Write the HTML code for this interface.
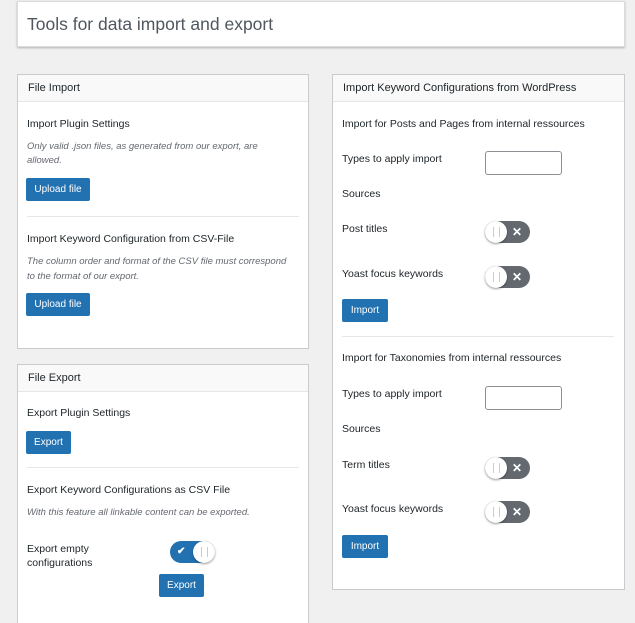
<!DOCTYPE html>
<html><head><meta charset="utf-8"><style>
*{box-sizing:border-box;margin:0;padding:0}
html,body{width:635px;height:623px;overflow:hidden}
body{background:#f0f0f1;font-family:"Liberation Sans",sans-serif;color:#1d2327;position:relative;font-size:10.5px}
.a{position:absolute;white-space:nowrap}
.title{left:17px;top:1px;width:608px;height:46px;background:#fff;border:1px solid #dcdcde;box-shadow:0 1px 2px rgba(0,0,0,.25)}
.title span{position:absolute;left:9px;top:12px;font-size:17.5px;color:#50575e}
.panel{background:#fff;border:1px solid #c8cbcf}
.hd{position:absolute;left:0;top:0;right:0;height:27px;background:#f9f9f9;border-bottom:1px solid #e6e6e6;padding:7px 0 0 10px;font-size:11px}
.i{font-style:italic;color:#646970;font-size:9.5px}
.btn{position:absolute;background:#2271b1;color:#fff;border-radius:2px;font-size:10px;text-align:center;line-height:24px;height:23px}
.sep{position:absolute;height:1px;background:#e6e6e6}
.inp{position:absolute;width:77px;height:24px;border:1px solid #8c8f94;border-radius:3px;background:#fff}
.tg{position:absolute;width:45px;height:22px;border-radius:11px;background:#646970}
.tg .k{position:absolute;top:0;width:22px;height:22px;border-radius:50%;background:#fff;box-shadow:0 1px 2px rgba(0,0,0,.4)}
.tg .k:before{content:"";position:absolute;left:8px;top:6px;width:5px;height:10px;border-left:1px solid #ccc;border-right:1px solid #ccc}
.tg.off .k{left:0}
.tg.on{background:#2271b1}
.tg.on .k{right:0}
.tg .g{position:absolute;top:0;line-height:22px;color:#fff;font-size:12px;font-weight:bold}
</style></head><body>
<div class="a title"><span>Tools for data import and export</span></div>

<div class="a panel" style="left:17px;top:74px;width:292px;height:275px"><div class="hd">File Import</div></div>
<div class="a" style="left:27px;top:118px">Import Plugin Settings</div>
<div class="a i" style="left:27px;top:141px">Only valid .json files, as generated from our export, are</div>
<div class="a i" style="left:27px;top:155px">allowed.</div>
<div class="btn" style="left:26px;top:178px;width:64px">Upload file</div>
<div class="sep" style="left:27px;top:216px;width:272px"></div>
<div class="a" style="left:27px;top:233px">Import Keyword Configuration from CSV-File</div>
<div class="a i" style="left:27px;top:256px">The column order and format of the CSV file must correspond</div>
<div class="a i" style="left:27px;top:271px">to the format of our export.</div>
<div class="btn" style="left:26px;top:293px;width:64px">Upload file</div>

<div class="a panel" style="left:17px;top:364px;width:292px;height:270px"><div class="hd">File Export</div></div>
<div class="a" style="left:27px;top:407px">Export Plugin Settings</div>
<div class="btn" style="left:26px;top:431px;width:45px">Export</div>
<div class="sep" style="left:27px;top:467px;width:272px"></div>
<div class="a" style="left:27px;top:484px">Export Keyword Configurations as CSV File</div>
<div class="a i" style="left:27px;top:507px">With this feature all linkable content can be exported.</div>
<div class="a" style="left:27px;top:543px">Export empty</div>
<div class="a" style="left:27px;top:557px">configurations</div>
<div class="tg on" style="left:170px;top:541px"><span class="g" style="left:7px;font-size:10px">✔</span><div class="k"></div></div>
<div class="btn" style="left:159px;top:574px;width:45px">Export</div>

<div class="a panel" style="left:332px;top:74px;width:293px;height:516px"><div class="hd">Import Keyword Configurations from WordPress</div></div>
<div class="a" style="left:342px;top:118px">Import for Posts and Pages from internal ressources</div>
<div class="a" style="left:342px;top:153px">Types to apply import</div>
<div class="inp" style="left:485px;top:151px"></div>
<div class="a" style="left:342px;top:188px">Sources</div>
<div class="a" style="left:342px;top:223px">Post titles</div>
<div class="tg off" style="left:485px;top:221px"><div class="k"></div><span class="g" style="left:27px">✕</span></div>
<div class="a" style="left:342px;top:268px">Yoast focus keywords</div>
<div class="tg off" style="left:485px;top:266px"><div class="k"></div><span class="g" style="left:27px">✕</span></div>
<div class="btn" style="left:342px;top:299px;width:46px">Import</div>
<div class="sep" style="left:342px;top:336px;width:272px"></div>
<div class="a" style="left:342px;top:352px">Import for Taxonomies from internal ressources</div>
<div class="a" style="left:342px;top:388px">Types to apply import</div>
<div class="inp" style="left:485px;top:386px"></div>
<div class="a" style="left:342px;top:423px">Sources</div>
<div class="a" style="left:342px;top:459px">Term titles</div>
<div class="tg off" style="left:485px;top:457px"><div class="k"></div><span class="g" style="left:27px">✕</span></div>
<div class="a" style="left:342px;top:503px">Yoast focus keywords</div>
<div class="tg off" style="left:485px;top:501px"><div class="k"></div><span class="g" style="left:27px">✕</span></div>
<div class="btn" style="left:342px;top:535px;width:46px">Import</div>
</body></html>
